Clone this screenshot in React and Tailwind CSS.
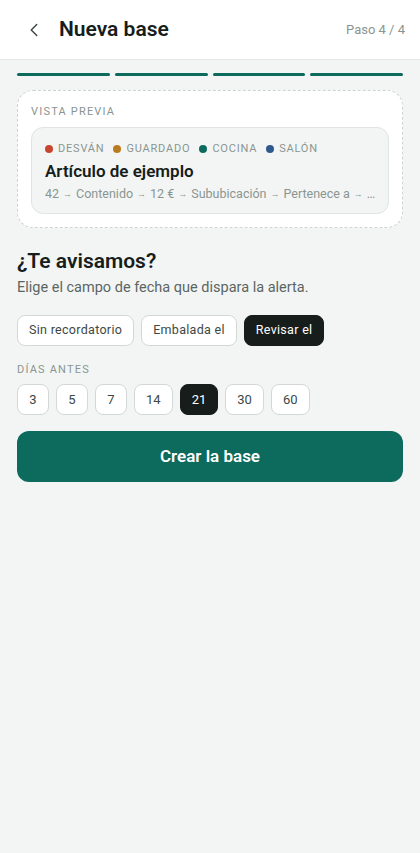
import { ChevronLeft } from "lucide-react";

const tags = [
  { label: "DESVÁN", color: "bg-[#c8452f]" },
  { label: "GUARDADO", color: "bg-[#b87b1d]" },
  { label: "COCINA", color: "bg-[#0d6b5e]" },
  { label: "SALÓN", color: "bg-[#2d5a8e]" },
];

const path = ["42", "Contenido", "12 €", "Sububicación", "Pertenece a", "…"];
const fields = ["Sin recordatorio", "Embalada el", "Revisar el"];
const days = [3, 5, 7, 14, 21, 30, 60];

export default function App() {
  return (
    <div className="min-h-[853px] bg-[#f3f5f4] font-['Roboto',sans-serif] text-[#161d1b]">
      <header className="h-[60px] bg-white border-b border-[#e3e6e5] flex items-center pl-6 pr-[15px]">
        <ChevronLeft size={22} strokeWidth={1.6} className="text-[#3d4744] -ml-[1px]" />
        <h1 className="ml-[14px] text-[21px] font-semibold">Nueva base</h1>
        <span className="ml-auto text-[13px] text-[#8a9591]">Paso 4 / 4</span>
      </header>

      <main className="px-[17px]">
        <div className="flex gap-[5px] pt-[13px]">
          {[0, 1, 2, 3].map((i) => (
            <div key={i} className="h-[3px] flex-1 rounded-full bg-[#0d6b5e]" />
          ))}
        </div>

        <section className="mt-[14px] rounded-2xl border border-dashed border-[#cdd3d1] bg-white px-[13px] pt-[13px] pb-[13px]">
          <p className="text-[11px] leading-4 tracking-[1.2px] text-[#8a9591]">VISTA PREVIA</p>
          <div className="mt-[7px] rounded-xl border border-[#e0e4e2] bg-[#f3f5f4] px-[13px] pt-[13px] pb-[10px]">
            <div className="flex items-center gap-[9px] text-[11px] leading-4 tracking-[0.8px] text-[#8a9591]">
              {tags.map((t) => (
                <span key={t.label} className="flex items-center gap-[5px]">
                  <span className={`h-[8px] w-[8px] rounded-full ${t.color}`} />
                  {t.label}
                </span>
              ))}
            </div>
            <h2 className="mt-[2px] text-[17px] leading-6 font-semibold">Artículo de ejemplo</h2>
            <p className="mt-[2px] flex items-center gap-[4px] text-[12.5px] leading-[18px] text-[#8a9591] whitespace-nowrap overflow-hidden">
              {path.map((p, i) => (
                <span key={i} className="flex items-center gap-[4px]">
                  {i > 0 && <span className="text-[9px]">→</span>}
                  {p}
                </span>
              ))}
            </p>
          </div>
        </section>

        <h2 className="mt-[19px] text-[21px] leading-7 font-semibold">¿Te avisamos?</h2>
        <p className="mt-[3px] text-[14.5px] leading-5 text-[#5b6663]">Elige el campo de fecha que dispara la alerta.</p>

        <div className="mt-[17px] flex gap-[7px]">
          {fields.map((f) => (
            <button
              key={f}
              className={`h-[31px] rounded-lg px-[11px] text-[12.5px] tracking-[0.3px] border ${
                f === "Revisar el"
                  ? "bg-[#161d1b] border-[#161d1b] text-white"
                  : "bg-white border-[#d3d8d6] text-[#3d4744]"
              }`}
            >
              {f}
            </button>
          ))}
        </div>

        <p className="mt-[16px] text-[11px] leading-4 tracking-[1.2px] text-[#8a9591]">DÍAS ANTES</p>
        <div className="mt-[6px] flex gap-[7px]">
          {days.map((d) => (
            <button
              key={d}
              className={`h-[31px] min-w-[32px] rounded-lg px-[11px] text-[13px] border ${
                d === 21
                  ? "bg-[#161d1b] border-[#161d1b] text-white"
                  : "bg-white border-[#d3d8d6] text-[#3d4744]"
              }`}
            >
              {d}
            </button>
          ))}
        </div>

        <button className="mt-[16px] h-[51px] w-full rounded-xl bg-[#0d6b5e] text-[17px] font-semibold text-white">
          Crear la base
        </button>
      </main>
    </div>
  );
}
